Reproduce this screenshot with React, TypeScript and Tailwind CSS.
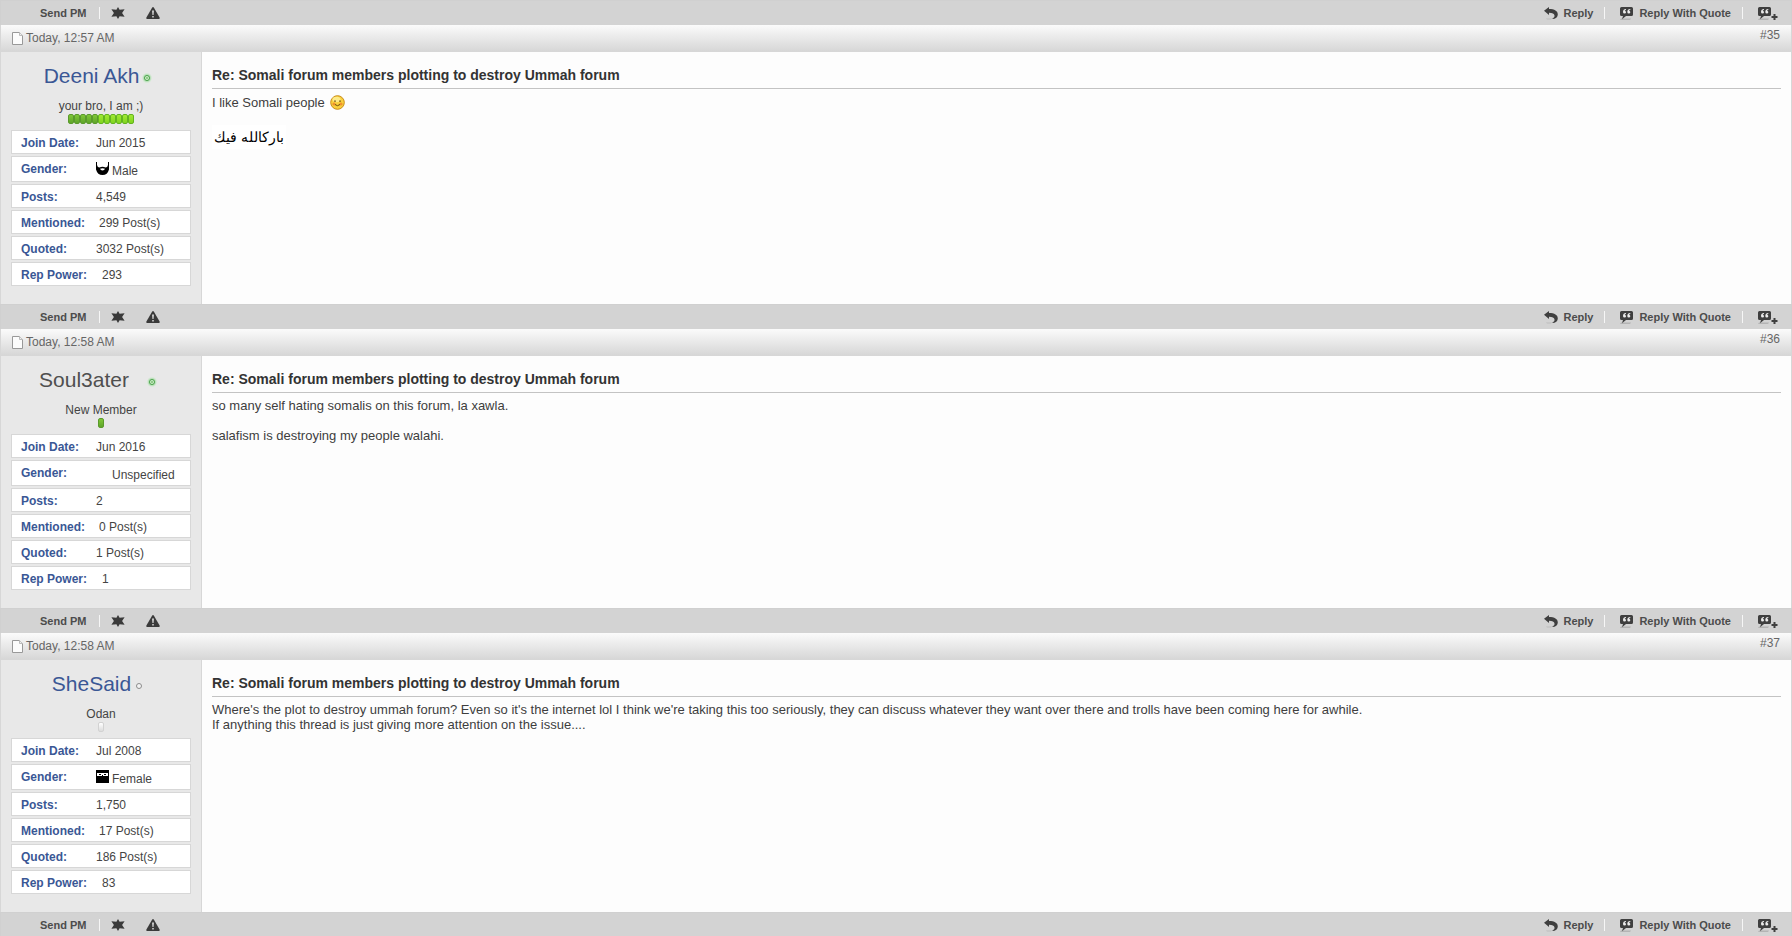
import type { ReactNode } from "react";

type Gender = "Male" | "Female" | "Unspecified";

interface Post {
  id: number;
  time: string;
  user: string;
  plainName?: boolean;
  online: boolean;
  rank: string;
  pips: number;
  joined: string;
  gender: Gender;
  posts: string;
  mentioned: string;
  quoted: string;
  rep: string;
  body: ReactNode;
}

const TITLE = "Re: Somali forum members plotting to destroy Ummah forum";

const POSTS: Post[] = [
  {
    id: 35,
    time: "Today, 12:57 AM",
    user: "Deeni Akh",
    online: true,
    rank: "your bro, I am ;)",
    pips: 11,
    joined: "Jun 2015",
    gender: "Male",
    posts: "4,549",
    mentioned: "299 Post(s)",
    quoted: "3032 Post(s)",
    rep: "293",
    body: (
      <>
        <p className="flex h-[17px] items-center gap-[5px]">
          I like Somali people <Smiley />
        </p>
        <p
          lang="ar"
          dir="rtl"
          className="mt-[14px] flex h-6 w-[74px] items-center justify-center bg-white text-sm whitespace-nowrap text-black"
        >
          باركالله فيك
        </p>
      </>
    ),
  },
  {
    id: 36,
    time: "Today, 12:58 AM",
    user: "Soul3ater",
    plainName: true,
    online: true,
    rank: "New Member",
    pips: 1,
    joined: "Jun 2016",
    gender: "Unspecified",
    posts: "2",
    mentioned: "0 Post(s)",
    quoted: "1 Post(s)",
    rep: "1",
    body: (
      <>
        <p>so many self hating somalis on this forum, la xawla.</p>
        <p className="mt-[15px]">salafism is destroying my people walahi.</p>
      </>
    ),
  },
  {
    id: 37,
    time: "Today, 12:58 AM",
    user: "SheSaid",
    online: false,
    rank: "Odan",
    pips: 0,
    joined: "Jul 2008",
    gender: "Female",
    posts: "1,750",
    mentioned: "17 Post(s)",
    quoted: "186 Post(s)",
    rep: "83",
    body: (
      <>
        <p>
          Where's the plot to destroy ummah forum? Even so it's the internet lol I think we're taking
          this too seriously, they can discuss whatever they want over there and trolls have been
          coming here for awhile.
        </p>
        <p>If anything this thread is just giving more attention on the issue....</p>
      </>
    ),
  },
];

function Smiley() {
  return (
    <svg width="15" height="15" viewBox="0 0 15 15" role="img" aria-label="smile">
      <circle cx="7.5" cy="7.5" r="6.8" fill="#f8cf3c" stroke="#c98a16" />
      <ellipse cx="6.5" cy="4.5" rx="4" ry="2.8" fill="#fdeb8a" />
      <circle cx="4" cy="9" r="1.6" fill="#f0922e" />
      <circle cx="11" cy="9" r="1.6" fill="#f0922e" />
      <path d="M4 6.5q1-1.6 2 0M9 6.5q1-1.6 2 0M5 9.5q2.500 2.400 5 0" fill="none" stroke="#6b4a0a" />
    </svg>
  );
}

function PageIcon() {
  return (
    <svg width="11" height="13" viewBox="0 0 11 13" aria-hidden="true">
      <path d="M.5.5h7l3 3v9H.5z" fill="#fcfcfc" stroke="#999" />
      <path d="M7.500.5v3h3" fill="#eee" stroke="#bbb" />
    </svg>
  );
}

function StarIcon() {
  return (
    <svg width="14" height="12" viewBox="0 0 14 12" aria-hidden="true">
      <path d="M7 0l1.600 2.700 5-.5L11.100 6l2.500 3.800-5-.5L7 12 5.400 9.300l-5 .5L2.900 6 .4 2.200l5 .5z" fill="#3a3a3a" />
    </svg>
  );
}

function WarnIcon() {
  return (
    <svg width="14" height="12" viewBox="0 0 14 12" aria-hidden="true">
      <path d="M6.200.6Q7-.4 7.800.6l5.800 10Q14 12 13 12H1Q0 12 .4 10.600z" fill="#3a3a3a" />
      <path d="M6.100 3.500h1.800L7.500 8h-1zM6.300 9h1.400v1.500H6.300z" fill="#e4e4e4" />
    </svg>
  );
}

function ReplyIcon() {
  return (
    <svg width="14" height="13" viewBox="0 0 14 13" aria-hidden="true">
      <path d="M2 11.500h6L7 12.500H3z" fill="#bdbdbd" />
      <path d="M0 3.800L5 0v2C10.500 2 13.800 4 13.800 7.400c0 2.800-2 4.400-5.800 4.600 2-1 2.700-2.200 2.500-3.400C10.200 6.800 8.500 5.800 5 5.800v2.200z" fill="#3f3f3f" />
    </svg>
  );
}

function QuoteIcon({ plus }: { plus?: boolean }) {
  return (
    <svg width={plus ? 20 : 14} height="13" viewBox={plus ? "0 0 20 13" : "0 0 14 13"} aria-hidden="true">
      <path d="M1 11.500h10l-1 1.500H0z" fill="#b4b4b4" />
      <path d="M1.500 0h10Q13 0 13 1.500v6Q13 9 11.500 9H6l-4 3.200L3 9H1.500Q0 9 0 7.500v-6Q0 0 1.500 0z" fill="#3f3f3f" />
      <path d="M6 2Q3 2.200 3 5q0 1.500 1.500 1.500T6 5.200 4.700 4Q4.900 3 6 2.900zM10.300 2Q7.300 2.200 7.300 5q0 1.500 1.500 1.500t1.500-1.300T9 4q.2-1 1.300-1.100z" fill="#ececec" />
      {plus && <path d="M15.500 7h2v2h2v2h-2v2h-2v-2h-2V9h2z" fill="#3f3f3f" />}
    </svg>
  );
}

function GenderIcon({ gender }: { gender: Gender }) {
  return (
    <svg width="13" height="13" viewBox="0 0 13 13" aria-hidden="true">
      {gender === "Male" && (
        <path d="M0 0h1v3q.5 2.500 2.500 2.500Q6.500 3.800 9.500 5.500 11.500 5.500 12 3V0h1v7.500Q11.500 13 6.500 13T0 7.500zM4 6.800Q4.600 8.600 6.500 8.600T9 6.800Q6.500 5.600 4 6.800z" fillRule="evenodd" fill="#000" />
      )}
      {gender === "Female" && (
        <>
          <path d="M0 0h13v13H0z" fill="#000" />
          <path d="M1 3h11v3H1z" fill="#fff" />
          <path d="M3 4h2v1H3zM8 4h2v1H8zM6 5h1v1H6z" fill="#000" />
        </>
      )}
    </svg>
  );
}

function StatusDot({ online }: { online: boolean }) {
  return (
    <svg width="16" height="16" viewBox="0 0 16 16" role="img" aria-label={online ? "online" : "offline"}>
      {online && <circle cx="5" cy="8" r="4.800" fill="#d3e9d3" />}
      {online && <circle cx="5" cy="8" r="3.800" fill="#b2dcb2" />}
      <circle cx="5" cy="8" r="2.500" fill={online ? "#d4efcf" : "#f4f4f4"} stroke={online ? "#46a046" : "#8c8c8c"} />
      {online && <circle cx="5" cy="8" r="1" fill="#7cc274" />}
    </svg>
  );
}

function Reputation({ pips }: { pips: number }) {
  return (
    <div className="flex h-[10px] justify-center">
      {pips === 0 && (
        <span className="w-[6px] rounded-[2px] border border-[#d2d2d2] bg-linear-to-b from-white to-[#dcdcdc]" />
      )}
      {Array.from({ length: pips }, (_, i) => (
        <span
          key={i}
          className={
            i < 5
              ? "w-[6px] rounded-[2px] border border-[#5a9a2c] bg-linear-to-b from-[#80c838] to-[#5fa52a]"
              : "w-[6px] rounded-[2px] border border-[#63b41f] bg-linear-to-b from-[#a2ea34] to-[#7fd420]"
          }
        />
      ))}
    </div>
  );
}

function Divider() {
  return <span className="h-3 w-px bg-[#f6f6f6]" />;
}

function PostBar() {
  return (
    <div className="flex h-[25px] items-center justify-between border-x border-t border-[#d0d0d0] bg-[#d3d3d3] pr-[13px] pl-[39px] text-[11px] font-bold text-[#4c4c4c]">
      <div className="flex items-center">
        <button type="button" className="mr-[13px]">Send PM</button>
        <Divider />
        <button type="button" aria-label="Rate" className="ml-[11px]"><StarIcon /></button>
        <button type="button" aria-label="Report" className="ml-[21px]"><WarnIcon /></button>
      </div>
      <div className="flex items-center">
        <a href="#reply" className="mr-[11px] flex items-center gap-[5px]"><ReplyIcon />Reply</a>
        <Divider />
        <a href="#quote" className="mr-[11px] ml-[15px] flex items-center gap-[5px]"><QuoteIcon />Reply With Quote</a>
        <Divider />
        <button type="button" aria-label="Multi-quote" className="ml-[15px]"><QuoteIcon plus /></button>
      </div>
    </div>
  );
}

function Stat({ label, tall, children }: { label: string; tall?: boolean; children: ReactNode }) {
  return (
    <div className={`flex border border-[#d7d7d7] bg-white px-[9px] leading-6 ${tall ? "h-[26px]" : "h-6"}`}>
      <dt className="w-[75px] shrink-0 font-bold whitespace-nowrap text-[#3a5795]">{label}</dt>
      <dd className="whitespace-nowrap">{children}</dd>
    </div>
  );
}

function UserInfo({ post }: { post: Post }) {
  return (
    <aside className="w-[201px] shrink-0 border-r border-[#d7d7d7] bg-[#e8e8e8] px-[10px] pt-[10px] pb-[18px] text-xs text-[#444]">
      <div className="flex items-center justify-center gap-[3px]">
        {post.plainName ? (
          <span className="mr-[15px] text-[21px] leading-7 text-[#4f4f4f]">{post.user}</span>
        ) : (
          <a href={`#${post.user}`} className="text-[21px] leading-7 text-[#3a5795]">{post.user}</a>
        )}
        <span className="pt-1"><StatusDot online={post.online} /></span>
      </div>
      <p className="mt-2 text-center leading-4">{post.rank}</p>
      <Reputation pips={post.pips} />
      <dl className="mt-[6px] flex flex-col gap-[2px]">
        <Stat label="Join Date:">{post.joined}</Stat>
        <Stat label="Gender:" tall>
          <span className="flex gap-[3px]">
            <span className="pt-[5px]"><GenderIcon gender={post.gender} /></span>
            <span className="pt-[2px]">{post.gender}</span>
          </span>
        </Stat>
        <Stat label="Posts:">{post.posts}</Stat>
        <Stat label="Mentioned:"><span className="pl-[3px]">{post.mentioned}</span></Stat>
        <Stat label="Quoted:">{post.quoted}</Stat>
        <Stat label="Rep Power:"><span className="pl-[6px]">{post.rep}</span></Stat>
      </dl>
    </aside>
  );
}

function PostItem({ post }: { post: Post }) {
  return (
    <article>
      <header className="flex h-[27px] justify-between border-x border-b border-[#d7d7d7] bg-linear-to-b from-[#fbfbfb] to-[#d7d7d7] pr-[11px] pl-[11px] text-xs text-[#666]">
        <span className="flex items-center gap-[3px]"><PageIcon />{post.time}</span>
        <a href={`#post${post.id}`} className="leading-5">#{post.id}</a>
      </header>
      <div className="flex border-x border-[#d7d7d7] bg-[#fdfdfd]">
        <UserInfo post={post} />
        <div className="min-w-0 flex-1 px-[10px] pt-[14px] text-[13px] leading-[15px] text-[#3e3e3e]">
          <h2 className="mb-[5px] border-b border-[#c3c3c3] pb-1 text-sm leading-[18px] font-bold text-[#333]">{TITLE}</h2>
          {post.body}
        </div>
      </div>
      <PostBar />
    </article>
  );
}

export default function App() {
  return (
    <main className="font-['Liberation_Sans',Arial,sans-serif]">
      <PostBar />
      {POSTS.map((post) => (
        <PostItem key={post.id} post={post} />
      ))}
    </main>
  );
}
